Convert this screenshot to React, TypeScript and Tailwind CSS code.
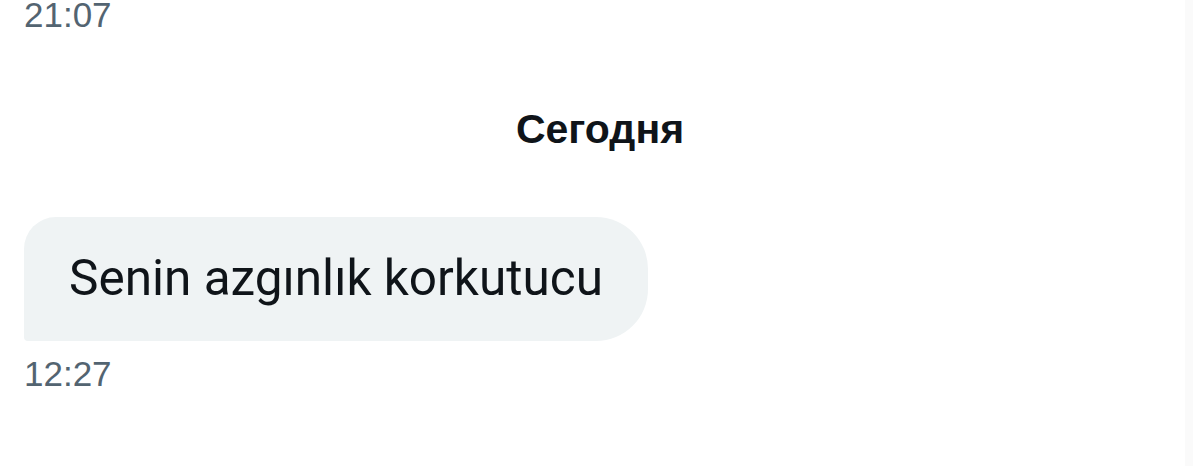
export default function App() {
  return (
    <div className="relative flex h-[466px] w-[1200px] flex-col overflow-hidden bg-white pl-[24px] font-['Liberation_Sans',Arial,sans-serif]">
      {/* previous day timestamp */}
      <div className="text-[35px] leading-[29px] text-[#536471]">21:07</div>

      {/* day separator */}
      <div className="mt-[80px] -ml-[24px] text-center text-[41px] font-bold leading-none text-[#0f1419]">
        Сегодня
      </div>

      {/* received message */}
      <div className="mt-[67px] flex">
        <div className="flex h-[124px] items-center rounded-tl-[32px] rounded-tr-[52px] rounded-br-[52px] rounded-bl-[4px] bg-[#eff3f4] pl-[45px] pr-[45px]">
          <span className="font-['Roboto',sans-serif] text-[49.5px] leading-none text-[#0f1419]">
            Senin azgınlık korkutucu
          </span>
        </div>
      </div>
      <div className="mt-[15px] text-[35px] leading-none text-[#536471]">12:27</div>

      {/* scroll track */}
      <div className="absolute right-[7px] top-0 h-full w-[8px] bg-[#fafafa]" />
    </div>
  );
}
